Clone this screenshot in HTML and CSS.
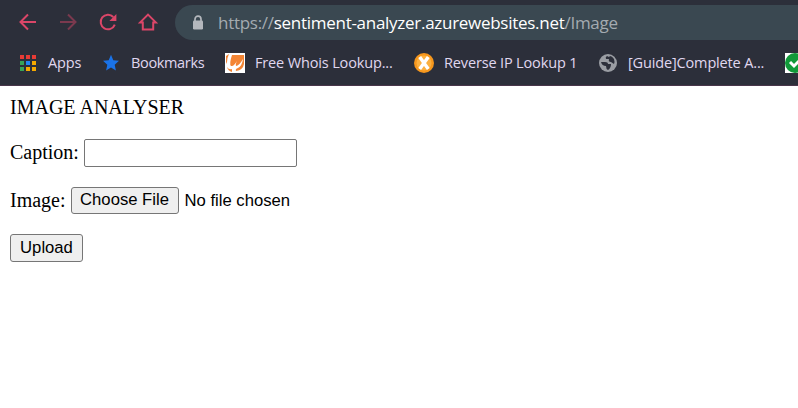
FILE: index.html
```html
<!DOCTYPE html>
<html lang="en">
<head>
<meta charset="utf-8">
<title>Image Analyser</title>
<link rel="stylesheet" href="styles.css">
</head>
<body>
<header class="browser">
  <div class="toolbar">
    <nav class="controls">
      <svg class="nav-icon" viewBox="0 0 20 20"><path d="M18 10H3M10 2.5 2.5 10 10 17.5"/></svg>
      <svg class="nav-icon dim" viewBox="0 0 20 20"><path d="M2 10H17M10 2.5 17.5 10 10 17.5"/></svg>
      <svg class="nav-icon" viewBox="0 0 20 20"><path d="M16.8 12.6A7.3 7.3 0 1 1 15.3 5"/><path class="solid" d="M18.4 2V9H11.4Z"/></svg>
      <svg class="nav-icon" viewBox="0 0 20 20"><path d="M2.2 10.4 10 2.6 17.8 10.4H15.2V17.6H4.8V10.4Z"/></svg>
    </nav>
    <div class="address">
      <svg class="lock" viewBox="0 0 12 16"><path class="shackle" d="M3 7V4.2a3 3 0 0 1 6 0V7"/><rect x="1" y="5.5" width="10" height="9" rx="1.2"/></svg>
      <span class="url">https://<span class="host">sentiment-analyzer.azurewebsites.net</span>/Image</span>
    </div>
  </div>
  <nav class="bookmarks">
    <a class="bookmark apps"><svg class="favicon" viewBox="0 0 20 20"><path fill="#e83b35" d="M2 1h4v4H2zM8 1h4v4H8zM14 1h4v4h-4z"/><path fill="#36a458" d="M2 7h4v4H2zM2 13h4v4H2z"/><path fill="#2186f3" d="M8 7h4v4H8z"/><path fill="#f6a900" d="M14 7h4v4h-4zM8 13h4v4H8zM14 13h4v4h-4z"/></svg><span class="label">Apps</span></a>
    <a class="bookmark starred"><svg class="favicon" viewBox="0 0 20 20"><path fill="#1a73e8" d="M10 1.8 12.3 7.2 18 7.8 13.7 11.7 14.9 17.4 10 14.4 5.1 17.4 6.3 11.7 2 7.8 7.7 7.2Z"/></svg><span class="label">Bookmarks</span></a>
    <a class="bookmark whois"><svg class="favicon" viewBox="0 0 20 20"><path fill="#fff" d="M0 0h20v20H0z"/><path fill="#f48534" d="M1 3 4 1Q2 5 2 9L1 11ZM7 2H19V11Q18 17 11 18Q10 16 13 15Q17 13 18 6Q14 13 11 13Q10 11 13 6Q9 14 6 13Q4 11 7 2ZM2 14Q4 17 7 16V19Q3 18 2 14Z"/></svg><span class="label">Free Whois Lookup...</span></a>
    <a class="bookmark reverse"><svg class="favicon" viewBox="0 0 20 20"><circle cx="10" cy="10" r="10" fill="#f6971d"/><circle cx="10" cy="10" r="7.5" fill="#fbb040"/><path stroke="#fff" stroke-width="3.4" d="M5.7 4 14.3 16M14.3 4 5.7 16"/></svg><span class="label">Reverse IP Lookup 1</span></a>
    <a class="bookmark guide"><svg class="favicon" viewBox="0 0 20 20"><circle cx="10" cy="10" r="9" fill="#9a9da3"/><path fill="#2c2f3a" d="M9 3Q7 4 8 6H11Q10 9 13 9L16 11Q17 9 16 6Q14 3 12 3L11 4ZM3 9H7Q10 9 10 11H13Q13 15 10 17Q8 16 8 13Q4 13 3 9Z"/></svg><span class="label">[Guide]Complete A...</span></a>
    <a class="bookmark"><svg class="favicon" viewBox="0 0 20 20"><path fill="#fff" d="M0 0h20v20H0z"/><circle cx="10" cy="10" r="10" fill="#119a39"/><path fill="none" stroke="#fff" stroke-width="3" d="M5 9 9 13 16 6"/></svg></a>
  </nav>
</header>
<main class="page">
  <div class="title">IMAGE ANALYSER</div>
  <form>
    <div class="row caption-row"><label for="caption">Caption:</label><input class="caption" id="caption" type="text"></div>
    <div class="row file-row"><span>Image:</span><button class="button choose" type="button">Choose File</button><span class="status">No file chosen</span></div>
    <button class="button upload" type="button">Upload</button>
  </form>
</main>
</body>
</html>
```
FILE: styles.css
```css
* { box-sizing: border-box; }
body {
  margin: 0;
  height: 408px;
  overflow: hidden;
  background: #fff;
  color: #000;
  font: 20px/23px "Liberation Serif", serif;
}
.browser {
  height: 86px;
  padding-top: 5px;
  overflow: hidden;
  background: #2c2f3a;
  border-bottom: 1px solid #49364a;
  font-family: "Open Sans", "Noto Sans", sans-serif;
}
.toolbar { display: flex; height: 35px; padding-left: 17.5px; }
.controls { display: flex; gap: 20px; width: 157.5px; padding-top: 7px; }
.nav-icon {
  flex: none;
  width: 20px;
  height: 20px;
  fill: none;
  stroke: #db4668;
  stroke-width: 2;
}
.nav-icon .solid { fill: #db4668; stroke: none; }
.dim { opacity: .45; }
.address {
  display: flex;
  align-items: center;
  flex: 1;
  padding-left: 17px;
  background: #3a4851;
  border-radius: 18px 0 0 18px;
}
.lock { width: 12px; height: 16px; margin-right: 14px; fill: #b4b8bd; }
.shackle { fill: none; stroke: #b4b8bd; stroke-width: 1.7; }
.url {
  color: #a4abb0;
  font-size: 17px;
  letter-spacing: -.28px;
  white-space: nowrap;
}
.host { color: #fff; }
.bookmarks { display: flex; padding: 13px 0 0 18px; }
.bookmark { display: flex; align-items: center; flex: none; height: 20px; }
.favicon { flex: none; width: 20px; height: 20px; margin-right: 10px; }
.label {
  padding-bottom: 2px;
  color: #e0d8f0;
  font-size: 14.5px;
  letter-spacing: -.15px;
  white-space: nowrap;
}
.apps { width: 83px; }
.apps .favicon { margin-top: 2px; }
.starred { width: 124px; }
.starred .label { letter-spacing: -.35px; }
.whois { width: 189px; }
.reverse { width: 184px; }
.guide { width: 187px; }
.page { padding: 10px; }
.title { height: 23px; }
.row { display: flex; align-items: center; }
.row > label { padding-bottom: 2px; }
.caption-row { height: 28px; margin-top: 20px; }
.file-row { height: 28px; margin-top: 19px; }
.caption {
  width: 213px;
  height: 28px;
  margin: 0 0 0 5px;
  border: 1px solid #767676;
  border-radius: 2px;
}
.button {
  height: 28px;
  padding: 0;
  background: #efefef;
  border: 1px solid #767676;
  border-radius: 3px;
  color: #000;
  font: 16.67px/20px "Liberation Sans", sans-serif;
}
.choose { width: 108px; height: 27px; margin-left: 5px; }
.status { margin-left: 6px; padding-top: 1px; font: 16.67px/20px "Liberation Sans", sans-serif; }
.upload { display: block; width: 73px; margin-top: 20px; }
```
